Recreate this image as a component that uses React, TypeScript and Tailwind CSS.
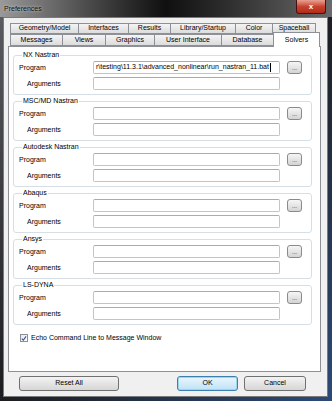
import React from "react"

const topTabs = [
  { label: "Geometry/Model", w: 68 },
  { label: "Interfaces", w: 50 },
  { label: "Results", w: 42 },
  { label: "Library/Startup", w: 65 },
  { label: "Color", w: 37 },
  { label: "Spaceball", w: 44 },
]

const frontTabs = [
  { label: "Messages", w: 52 },
  { label: "Views", w: 43 },
  { label: "Graphics", w: 49 },
  { label: "User Interface", w: 67 },
  { label: "Database", w: 52 },
]

const solvers = ["NX Nastran", "MSC/MD Nastran", "Autodesk Nastran", "Abaqus", "Ansys", "LS-DYNA"]

function Tab({ label, w }: { label: string; w: number }) {
  return (
    <div
      style={{ width: w }}
      className="flex h-full shrink-0 items-center justify-center border border-r-0 border-[#8e9097] bg-gradient-to-b from-[#f4f4f4] to-[#dcdcdc] last:border-r"
    >
      {label}
    </div>
  )
}

function Field({ value }: { value?: string }) {
  return (
    <div className="flex h-[13px] w-[187px] items-center overflow-hidden whitespace-nowrap rounded-[2px] border border-[#c2c4c8] border-t-[#a9abb1] bg-white pl-[2px]">
      {value}
      {value && <span className="ml-[1px] h-[9px] w-px bg-black" />}
    </div>
  )
}

function SmallButton() {
  return (
    <div className="ml-[7px] flex h-[13px] w-[15px] items-end justify-center rounded-[3px] border border-[#8a8a8a] bg-gradient-to-b from-[#f6f6f6] to-[#d4d4d4] pb-[2px] text-[6px] leading-[6px]">
      ...
    </div>
  )
}

function SolverGroup({ name, program }: { name: string; program?: string }) {
  return (
    <fieldset className="mt-[2px] w-[299px] rounded-[3px] border border-[#d5dfe5] pb-[4px] pl-[5px] first:mt-0">
      <legend className="ml-[3px] px-[1px] leading-[8px]">{name}</legend>
      <div className="flex flex-col gap-[3px] pt-[2px]">
        <div className="flex h-[13px] items-center">
          <span className="w-[74px] leading-[8px]">Program</span>
          <Field value={program} />
          <SmallButton />
        </div>
        <div className="flex h-[13px] items-center">
          <span className="w-[74px] pl-[8px] leading-[8px]">Arguments</span>
          <Field />
        </div>
      </div>
    </fieldset>
  )
}

function DlgButton({ label, w, def }: { label: string; w: number; def?: boolean }) {
  return (
    <div
      style={{ width: w }}
      className={
        def
          ? "flex h-[15px] items-center justify-center rounded-[3px] border border-[#3c7fb1] bg-gradient-to-b from-[#eaf6fd] to-[#bfe2f6] shadow-[inset_0_0_0_1px_#9ed4f2]"
          : "flex h-[15px] items-center justify-center rounded-[3px] border border-[#707070] bg-gradient-to-b from-[#f3f3f3] to-[#d6d6d6]"
      }
    >
      {label}
    </div>
  )
}

export default function App() {
  return (
    <div
      className="flex h-[401px] w-[332px] flex-col overflow-hidden bg-gradient-to-br from-[#5b5e63] via-[#1c1d20] to-[#2c4a78] text-[7px] text-black"
      style={{ fontFamily: '"Liberation Sans", Arial, sans-serif' }}
    >
      {/* title bar */}
      <div className="flex h-[17px] shrink-0 items-start bg-gradient-to-r from-[#9a9a9a] via-[#101010] to-[#6a6a6a]">
        <span className="ml-[4px] mt-[4px] text-[7px] text-[#111] [text-shadow:0_0_3px_#e0e0e0]">Preferences</span>
        <div className="ml-auto mr-[6px] flex h-[14px] w-[30px] items-center justify-center rounded-b-[3px] border border-t-0 border-[#4a1010] bg-gradient-to-b from-[#e8a093] via-[#c7432e] to-[#b22a1a] text-[8px] font-bold text-white">
          x
        </div>
      </div>

      {/* client */}
      <div className="mb-[4px] ml-[3px] mr-[4px] flex flex-1 flex-col border border-[#7a7a7a] bg-[#f0f0f0] pl-[4px] pr-[7px] pt-[5px]">
        {/* tab rows */}
        <div className="ml-[2px] flex h-[11px] w-[306px]">
          {topTabs.map((t) => (
            <Tab key={t.label} {...t} />
          ))}
        </div>
        <div className="ml-[2px] flex h-[12px] items-end">
          {frontTabs.map((t) => (
            <Tab key={t.label} {...t} />
          ))}
          <div className="relative z-10 -mb-px flex h-[15px] w-[47px] items-start justify-center border border-b-0 border-[#8e9097] bg-white pt-[2px]">
            Solvers
          </div>
        </div>

        {/* panel */}
        <div className="flex h-[326px] w-[313px] flex-col border border-[#8e9097] bg-white pl-[4px] pt-[4px]">
          {solvers.map((s, i) => (
            <SolverGroup
              key={s}
              name={s}
              program={i === 0 ? "r\\testing\\11.3.1\\advanced_nonlinear\\run_nastran_11.bat" : undefined}
            />
          ))}
          <div className="ml-[7px] mt-[8px] flex items-center gap-[3px]">
            <div className="flex h-[8px] w-[8px] items-center justify-center border border-[#8e8f8f] bg-gradient-to-br from-[#e8e8e8] to-white">
              <svg viewBox="0 0 8 8" className="h-[7px] w-[7px]">
                <path d="M1.2 4.2 L3.1 6.3 L6.8 1.2" fill="none" stroke="#2a4f9e" strokeWidth="1.4" />
              </svg>
            </div>
            <span>Echo Command Line to Message Window</span>
          </div>
        </div>

        {/* buttons */}
        <div className="mt-[4px] flex items-center">
          <div className="ml-[11px]">
            <DlgButton label="Reset All" w={100} />
          </div>
          <div className="ml-auto mr-[14px] flex gap-[6px]">
            <DlgButton label="OK" w={61} def />
            <DlgButton label="Cancel" w={62} />
          </div>
        </div>
      </div>
    </div>
  )
}
